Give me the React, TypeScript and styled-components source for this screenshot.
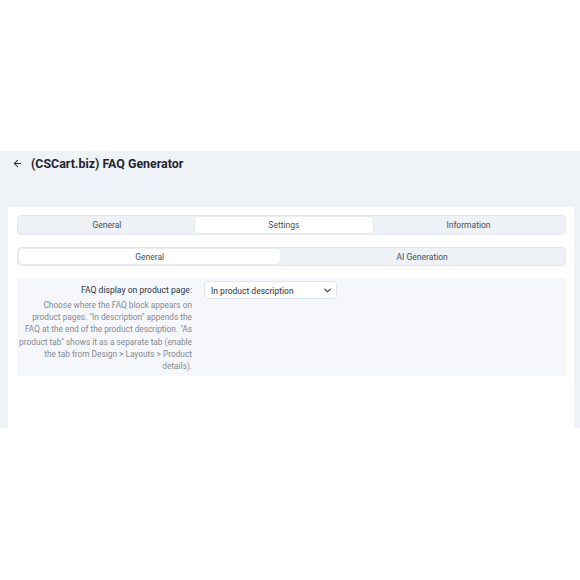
import React, { useState } from "react";
import styled, { createGlobalStyle } from "styled-components";

const Global = createGlobalStyle`
  html, body { margin: 0; padding: 0; background: #ffffff; }
  body { font-family: Roboto, "Noto Sans", "Liberation Sans", sans-serif; color: #2b3340; }
  * { box-sizing: border-box; }
`;

const Screen = styled.div`
  margin-top: 151px;
  height: 277px;
  overflow: hidden;
  background: #eff2f7;
  padding: 0 6px 0 8px;
`;

const Header = styled.header`
  height: 56px;
  display: flex;
  align-items: flex-start;
  gap: 8px;
  padding: 5px 0 0 4px;
`;

const BackButton = styled.button`
  border: 0;
  background: none;
  padding: 0;
  margin-top: 2px;
  width: 11px;
  height: 11px;
  color: #2a303b;
  display: flex;
  cursor: pointer;
`;

const Title = styled.h1`
  margin: 0;
  font-size: 12.4px;
  line-height: 16px;
  font-weight: 700;
  color: #1f2631;
`;

const Card = styled.section`
  background: #ffffff;
  border-radius: 4px;
  padding: 8px 8px 40px 9px;
  min-height: 240px;
`;

const TabBar = styled.div<{ $tall?: boolean }>`
  display: flex;
  background: #eef1f6;
  border: 1px solid #e3e7ee;
  border-radius: 4px;
  padding: 1px;
  height: ${(p) => (p.$tall ? 20 : 19)}px;
`;

const Tab = styled.button<{ $active: boolean }>`
  flex: 1 1 auto;
  border: 0;
  border-radius: 3px;
  font-family: inherit;
  font-size: 8.5px;
  line-height: 1;
  color: #474e59;
  background: ${(p) => (p.$active ? "#ffffff" : "transparent")};
  box-shadow: ${(p) => (p.$active ? "0 0 1px rgba(30,40,60,0.2)" : "none")};
  padding: 1px 0 0;
  cursor: pointer;
`;

const SubTabs = styled.div`
  margin-top: 12px;
`;

const SettingRow = styled.div`
  margin-top: 12px;
  background: #f5f7fa;
  display: grid;
  grid-template-columns: 175px 133px;
  column-gap: 12px;
  padding: 3px 0 4px;
`;

const LabelCell = styled.div`
  text-align: right;
`;

const Label = styled.label`
  display: block;
  font-size: 8.6px;
  line-height: 18px;
  color: #2e3540;
`;

const Hint = styled.p`
  margin: 0;
  font-size: 8.3px;
  line-height: 12.2px;
  color: #858a93;
`;

const SelectBox = styled.div`
  position: relative;
  height: 18px;
  background: #ffffff;
  border: 1px solid #e1e5ec;
  border-radius: 3px;
  display: flex;
  align-items: center;
  padding: 1px 0 0 6px;
  font-size: 8.5px;
  color: #2b323d;
`;

const Chevron = styled.svg`
  position: absolute;
  right: 5px;
  top: 6px;
`;

export default function App() {
  const [top, setTop] = useState(1);
  const [sub, setSub] = useState(0);
  const topTabs = ["General", "Settings", "Information"];
  const subTabs = ["General", "AI Generation"];

  return (
    <>
      <Global />
      <Screen>
        <Header>
          <BackButton aria-label="Back">
            <svg width="11" height="11" viewBox="0 0 24 24" fill="none" stroke="currentColor" strokeWidth="2.2" strokeLinecap="round" strokeLinejoin="round">
              <path d="M19 12H5" />
              <path d="M12 19l-7-7 7-7" />
            </svg>
          </BackButton>
          <Title>(CSCart.biz) FAQ Generator</Title>
        </Header>
        <Card>
          <TabBar $tall>
            {topTabs.map((t, i) => (
              <Tab key={t} $active={i === top} onClick={() => setTop(i)}>
                {t}
              </Tab>
            ))}
          </TabBar>
          <SubTabs>
            <TabBar>
              {subTabs.map((t, i) => (
                <Tab key={t} $active={i === sub} onClick={() => setSub(i)}>
                  {t}
                </Tab>
              ))}
            </TabBar>
          </SubTabs>
          <SettingRow>
            <LabelCell>
              <Label>FAQ display on product page:</Label>
              <Hint>
                Choose where the FAQ block appears on product pages. "In description" appends the FAQ at the end of the
                product description. "As product tab" shows it as a separate tab (enable the tab from Design &gt; Layouts
                &gt; Product details).
              </Hint>
            </LabelCell>
            <SelectBox>
              In product description
              <Chevron width="7" height="5" viewBox="0 0 10 6" fill="none" stroke="#3a404a" strokeWidth="1.8" strokeLinecap="round" strokeLinejoin="round">
                <path d="M1 1l4 4 4-4" />
              </Chevron>
            </SelectBox>
          </SettingRow>
        </Card>
      </Screen>
    </>
  );
}
